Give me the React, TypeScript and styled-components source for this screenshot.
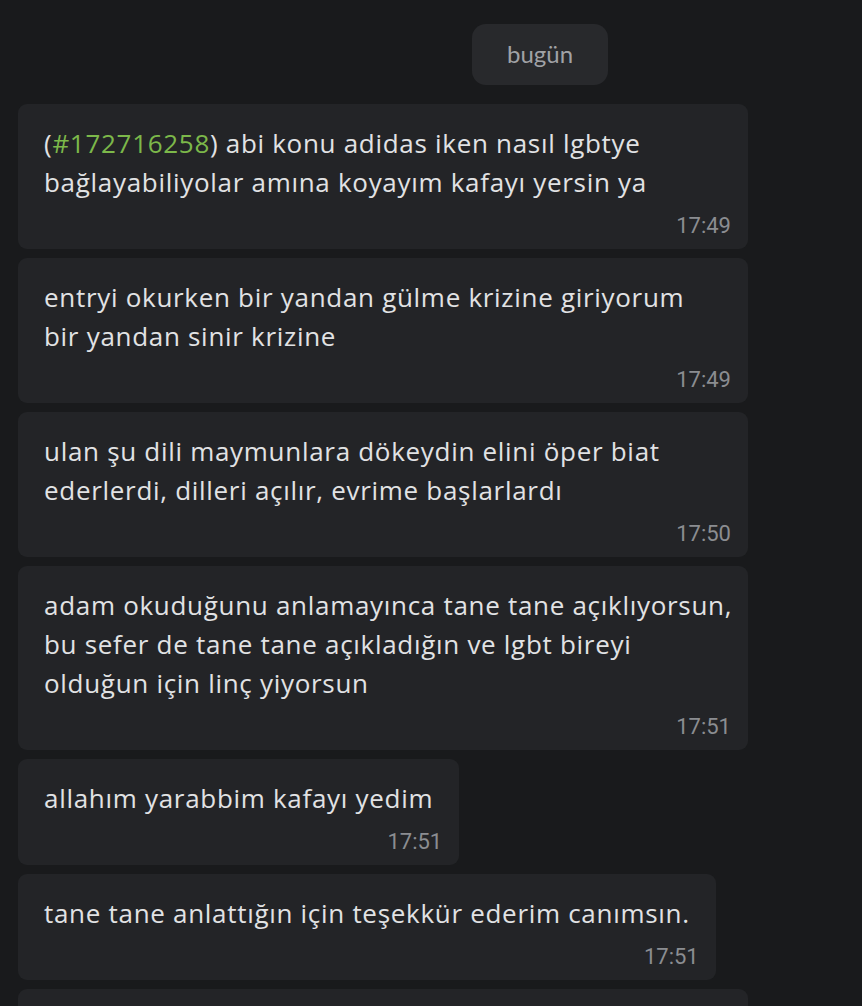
import styled, { createGlobalStyle } from 'styled-components';

type Part = { text: string; ref?: boolean };
type Message = { lines: Part[][]; time: string };

const messages: Message[] = [
  {
    lines: [
      [
        { text: '(' },
        { text: '#172716258', ref: true },
        { text: ') abi konu adidas iken nasıl lgbtye' },
      ],
      [{ text: 'bağlayabiliyolar amına koyayım kafayı yersin ya' }],
    ],
    time: '17:49',
  },
  {
    lines: [
      [{ text: 'entryi okurken bir yandan gülme krizine giriyorum' }],
      [{ text: 'bir yandan sinir krizine' }],
    ],
    time: '17:49',
  },
  {
    lines: [
      [{ text: 'ulan şu dili maymunlara dökeydin elini öper biat' }],
      [{ text: 'ederlerdi, dilleri açılır, evrime başlarlardı' }],
    ],
    time: '17:50',
  },
  {
    lines: [
      [{ text: 'adam okuduğunu anlamayınca tane tane açıklıyorsun,' }],
      [{ text: 'bu sefer de tane tane açıkladığın ve lgbt bireyi' }],
      [{ text: 'olduğun için linç yiyorsun' }],
    ],
    time: '17:51',
  },
  {
    lines: [[{ text: 'allahım yarabbim kafayı yedim' }]],
    time: '17:51',
  },
  {
    lines: [[{ text: 'tane tane anlattığın için teşekkür ederim canımsın.' }]],
    time: '17:51',
  },
  {
    lines: [
      [{ text: 'bu arada entrynin altındaki yorumları da okudum' }],
      [{ text: 'hepsi aynı kafada' }],
    ],
    time: '17:52',
  },
];

function Bubble({ msg }: { msg: Message }) {
  return (
    <Card $wide={msg.lines.length > 1}>
      <Body>
        {msg.lines.map((line, i) => (
          <Line key={i}>
            {line.map((p, j) =>
              p.ref ? <Ref key={j}>{p.text}</Ref> : <span key={j}>{p.text}</span>
            )}
          </Line>
        ))}
      </Body>
      <Time>{msg.time}</Time>
    </Card>
  );
}

export default function App() {
  return (
    <>
      <Global />
      <Chat>
        <DayRow>
          <DayChip>bugün</DayChip>
        </DayRow>
        {messages.map((m, i) => (
          <Bubble key={i} msg={m} />
        ))}
      </Chat>
    </>
  );
}

const Global = createGlobalStyle`
  html, body {
    margin: 0;
    background: #191a1c;
    height: 100%;
    overflow: hidden;
  }
  body {
    font-family: Lato, "Open Sans", "DejaVu Sans", sans-serif;
  }
`;

const Chat = styled.div`
  display: flex;
  flex-direction: column;
  align-items: flex-start;
  gap: 9px;
  padding: 24px 18px 0;
`;

const DayRow = styled.div`
  display: flex;
  padding-left: 454px;
  margin-bottom: 10px;
`;

const DayChip = styled.div`
  width: 136px;
  height: 61px;
  border-radius: 14px;
  background: #28292c;
  color: #a0a2a6;
  font-size: 24px;
  display: flex;
  align-items: center;
  justify-content: center;
  box-sizing: border-box;
  padding-bottom: 2px;
`;

const Card = styled.div<{ $wide: boolean }>`
  background: #232427;
  border-radius: 9px;
  box-sizing: border-box;
  width: ${(p) => (p.$wide ? '730px' : 'auto')};
  max-width: 730px;
  padding: 20px 17px 8px 26px;
`;

const Body = styled.div`
  color: #e1e2e4;
  font-family: "Open Sans", Lato, sans-serif;
  font-size: 26px;
  letter-spacing: 0.7px;
  line-height: 39px;
  padding-right: 9px;
`;

const Line = styled.div`
  white-space: nowrap;
`;

const Ref = styled.span`
  color: #7cb84a;
`;

const Time = styled.div`
  margin-top: 9px;
  text-align: right;
  color: #8b8d91;
  font-family: Roboto, "Liberation Sans", sans-serif;
  font-size: 22px;
  line-height: 30px;
`;
